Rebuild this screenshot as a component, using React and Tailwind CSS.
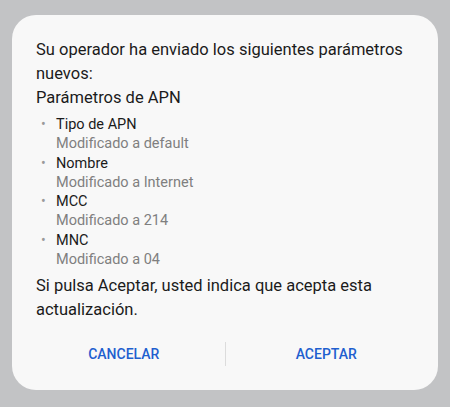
export default function App() {
  const items = [
    ["Tipo de APN", "Modificado a default"],
    ["Nombre", "Modificado a Internet"],
    ["MCC", "Modificado a 214"],
    ["MNC", "Modificado a 04"],
  ];
  return (
    <div className="w-[450px] h-[407px] bg-[#c2c3c5] pt-[15px] px-[12px]" style={{ fontFamily: "Roboto, 'Noto Sans', sans-serif" }}>
      <div className="w-[426px] h-[375px] bg-[#f8f8f8] rounded-[24px] px-[24px] pt-[23px]">
        <p className="text-[16.5px] leading-[24px] text-[#1b1b1b]">
          Su operador ha enviado los siguientes parámetros nuevos:
        </p>
        <p className="text-[16.5px] leading-[24px] text-[#1b1b1b]">Parámetros de APN</p>
        <ul className="mt-[5px] flex flex-col">
          {items.map(([t, s]) => (
            <li key={t} className="flex">
              <span className="w-[20px] pl-[5px] text-[#9a9a9a] text-[14px] leading-[19.3px]">•</span>
              <div>
                <div className="text-[14.5px] leading-[19.3px] text-[#1b1b1b]">{t}</div>
                <div className="text-[14.5px] leading-[19.3px] text-[#7f7f7f]">{s}</div>
              </div>
            </li>
          ))}
        </ul>
        <p className="mt-[5px] text-[16.5px] leading-[24px] text-[#1b1b1b]">
          Si pulsa Aceptar, usted indica que acepta esta actualización.
        </p>
        <div className="mt-[20px] -mx-[13px] flex items-center h-[24px]">
          <div className="flex-1 text-center text-[14px] font-medium text-[#1f5fcf]">CANCELAR</div>
          <div className="w-px h-[24px] bg-[#dcdcdc]" />
          <div className="flex-1 text-center text-[14px] font-medium text-[#1f5fcf]">ACEPTAR</div>
        </div>
      </div>
    </div>
  );
}
